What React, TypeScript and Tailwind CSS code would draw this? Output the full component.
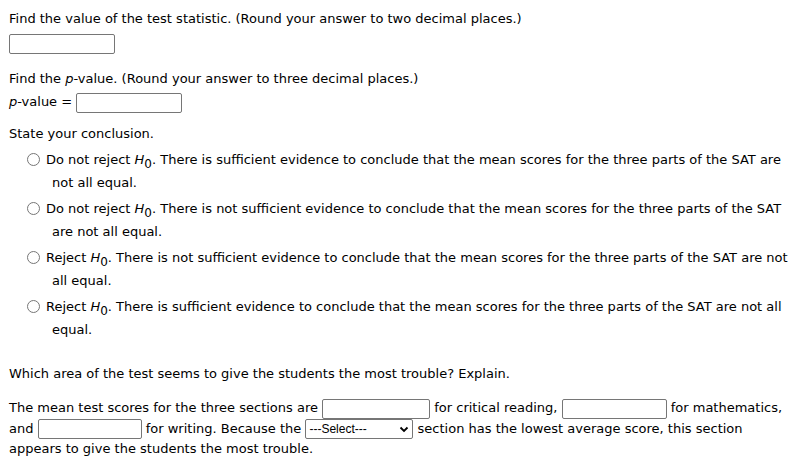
import React from "react";

const Box = ({ w = 106 }: { w?: number }) => (
  <span
    className="inline-block h-[20px] align-middle rounded-[2px] border border-[#767676] bg-white"
    style={{ width: w }}
  />
);

const H0 = () => (
  <>
    <i>H</i>
    <sub className="text-[12px] relative top-[4px] not-italic">0</sub>
  </>
);

const Radio = () => (
  <span className="inline-block w-[13px] h-[13px] rounded-full border border-[#767676] bg-white align-[-2px] mr-[6px] indent-0" />
);

const Option = ({ children }: { children: React.ReactNode }) => (
  <div className="pl-[43px] indent-[-25px] leading-[23px] pr-2">
    <Radio />
    {children}
  </div>
);

export default function App() {
  return (
    <div
      className="w-[802px] h-[467px] bg-white text-black text-[13px] leading-[16px] pl-[9px] pt-[11px]"
      style={{ fontFamily: '"DejaVu Sans", Verdana, sans-serif' }}
    >
      <div>Find the value of the test statistic. (Round your answer to two decimal places.)</div>
      <div className="mt-[7px]">
        <Box />
      </div>
      <div className="mt-[17px]">
        Find the <i>p</i>-value. (Round your answer to three decimal places.)
      </div>
      <div className="mt-[4px] leading-[22px]">
        <i>p</i>-value = <Box />
      </div>
      <div className="mt-[13px]">State your conclusion.</div>
      <div className="mt-[6px] flex flex-col gap-[3px]">
        <Option>
          Do not reject <H0 />. There is sufficient evidence to conclude that the mean scores for the three parts of the SAT are not all equal.
        </Option>
        <Option>
          Do not reject <H0 />. There is not sufficient evidence to conclude that the mean scores for the three parts of the SAT are not all equal.
        </Option>
        <Option>
          Reject <H0 />. There is not sufficient evidence to conclude that the mean scores for the three parts of the SAT are not all equal.
        </Option>
        <Option>
          Reject <H0 />. There is sufficient evidence to conclude that the mean scores for the three parts of the SAT are not all equal.
        </Option>
      </div>
      <div className="mt-[25px]">Which area of the test seems to give the students the most trouble? Explain.</div>
      <div className="mt-[16px] leading-[20px] pr-[12px]">
        The mean test scores for the three sections are <Box w={108} /> for critical reading, <Box w={105} /> for mathematics,
        and <Box w={104} /> for writing. Because the{" "}
        <span
          className="inline-flex items-center justify-between w-[108px] h-[20px] align-middle rounded-[2px] border border-[#767676] bg-white pl-[3px] pr-[3px] text-[12px] leading-[18px]"
          style={{ fontFamily: '"Liberation Sans", Arial, sans-serif' }}
        >
          <span>---Select---</span>
          <svg width="10" height="10" viewBox="0 0 10 10">
            <path d="M1.5 3.5 L5 7 L8.5 3.5" fill="none" stroke="#000" strokeWidth="1.8" />
          </svg>
        </span>{" "}
        section has the lowest average score, this section appears to give the students the most trouble.
      </div>
    </div>
  );
}
